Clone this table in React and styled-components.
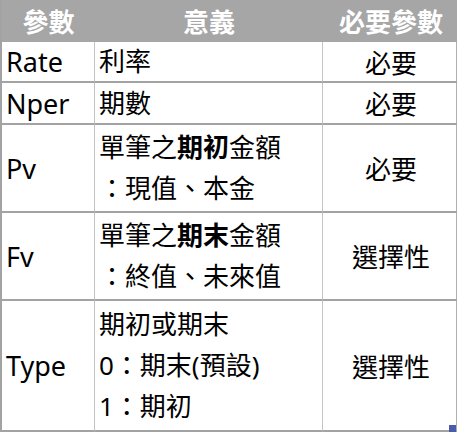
import React from 'react';
import styled, { createGlobalStyle } from 'styled-components';

const GlobalStyle = createGlobalStyle`
    html, body {
        margin: 0;
        padding: 0;
        background: #ffffff;
    }
    body {
        font-family: "Noto Sans", "Noto Sans CJK TC", sans-serif;
        color: #000000;
    }
`

const rows = [
    { name: 'Rate', height: 41, lines: [['利率']], need: '必要' },
    { name: 'Nper', height: 42, lines: [['期數']], need: '必要' },
    { name: 'Pv', height: 88, lines: [['單筆之', <b key="b">期初</b>, '金額'], ['：現值、本金']], need: '必要' },
    { name: 'Fv', height: 88, lines: [['單筆之', <b key="b">期末</b>, '金額'], ['：終值、未來值']], need: '選擇性' },
    { name: 'Type', height: 131, lines: [['期初或期末'], ['0：期末(預設)'], ['1：期初']], need: '選擇性' },
]

export default function App() {
    return (
        <>
            <GlobalStyle />
            <Sheet>
                <Table $rows={rows.map(r => r.height + 'px').join(' ')}>
                    <HeadCell>參數</HeadCell>
                    <HeadCell>意義</HeadCell>
                    <HeadCell>必要參數</HeadCell>
                    {rows.map(row => (
                        <React.Fragment key={row.name}>
                            <NameCell>{row.name}</NameCell>
                            <TextCell>
                                {row.lines.map((line, i) => <Line key={i}>{line}</Line>)}
                            </TextCell>
                            <NeedCell>{row.need}</NeedCell>
                        </React.Fragment>
                    ))}
                </Table>
                <Handle />
            </Sheet>
        </>
    )
}

const Sheet = styled.div`
    position: relative;
    width: 457px;
    height: 434px;
`
const Table = styled.div`
    display: grid;
    grid-template-columns: 93px 228px 136px;
    grid-template-rows: 42px ${p => p.$rows};
    width: 457px;
    box-sizing: border-box;
    border-left: 2px solid #a3a3a3;
    border-right: 1px solid #b0b0b0;
`
const Cell = styled.div`
    box-sizing: border-box;
    display: flex;
    align-items: center;
    border-bottom: 2px solid #a3a3a3;
    border-right: 1px solid #c4c4c4;
    font-size: 26px;
    &:nth-child(3n) {
        border-right: none;
    }
`
const HeadCell = styled(Cell)`
    justify-content: center;
    background: #a6a6a6;
    color: #ffffff;
    font-weight: 700;
    font-size: 26px;
    border-bottom: none;
    border-right: none;
`
const NameCell = styled(Cell)`
    padding-left: 4px;
    font-size: 27px;
`
const TextCell = styled(Cell)`
    flex-direction: column;
    align-items: flex-start;
    justify-content: center;
    padding-left: 4px;
`
const Line = styled.div`
    line-height: 41px;
    white-space: nowrap;
    > b {
        font-weight: 700;
    }
`
const NeedCell = styled(Cell)`
    justify-content: center;
`
const Handle = styled.div`
    position: absolute;
    right: 1px;
    top: 425px;
    width: 7px;
    height: 7px;
    background: #4a5bab;
`
